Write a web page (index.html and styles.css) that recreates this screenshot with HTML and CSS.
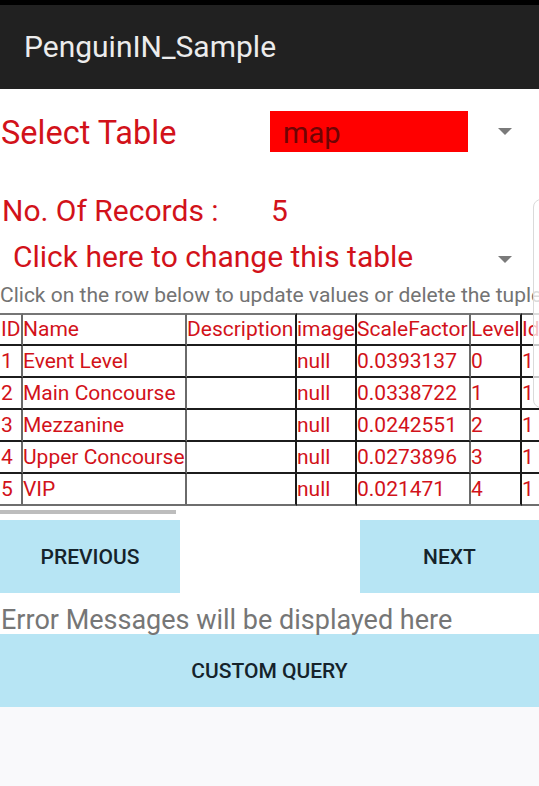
FILE: index.html
```html
<!DOCTYPE html>
<html>
<head>
<meta charset="utf-8">
<link rel="stylesheet" href="styles.css">
</head>
<body>
<div class="statusbar"></div>
<header class="appbar"><span class="title">PenguinIN_Sample</span></header>
<main class="content">
  <div class="select-row">
    <span class="select-label">Select Table</span>
    <div class="select-box"><span class="select-value">map</span></div>
    <span class="caret caret-1"></span>
  </div>
  <div class="records-row">
    <span class="records-label">No. Of Records :</span>
    <span class="records-value">5</span>
  </div>
  <div class="change-row">
    <span class="change-label">Click here to change this table</span>
    <span class="caret"></span>
  </div>
  <div class="hint">Click on the row below to update values or delete the tuple</div>
  <div class="table-wrap">
    <table class="data">
      <colgroup>
        <col class="c-id"><col class="c-name"><col class="c-desc"><col class="c-img"><col class="c-scale"><col class="c-level"><col class="c-id2">
      </colgroup>
      <tr class="head">
        <td class="v-gray">ID</td><td class="v-gray">Name</td><td class="v-dark">Description</td><td class="v-dark">image</td><td class="v-gray">ScaleFactor</td><td class="v-dark">Level</td><td>Id</td>
      </tr>
      <tr>
        <td class="v-gray">1</td><td class="v-gray">Event Level</td><td class="v-dark"></td><td class="v-dark">null</td><td class="v-gray">0.0393137</td><td class="v-dark">0</td><td>1</td>
      </tr>
      <tr>
        <td class="v-gray">2</td><td class="v-gray">Main Concourse</td><td class="v-dark"></td><td class="v-dark">null</td><td class="v-gray">0.0338722</td><td class="v-dark">1</td><td>1</td>
      </tr>
      <tr>
        <td class="v-gray">3</td><td class="v-gray">Mezzanine</td><td class="v-dark"></td><td class="v-dark">null</td><td class="v-gray">0.0242551</td><td class="v-dark">2</td><td>1</td>
      </tr>
      <tr>
        <td class="v-gray">4</td><td class="v-gray">Upper Concourse</td><td class="v-dark"></td><td class="v-dark">null</td><td class="v-gray">0.0273896</td><td class="v-dark">3</td><td>1</td>
      </tr>
      <tr class="last">
        <td class="v-gray">5</td><td class="v-gray">VIP</td><td class="v-dark"></td><td class="v-dark">null</td><td class="v-gray">0.021471</td><td class="v-dark">4</td><td>1</td>
      </tr>
    </table>
  </div>
  <div class="hscroll"><div class="hscroll-thumb"></div></div>
  <div class="nav-row">
    <button class="btn btn-prev">PREVIOUS</button>
    <button class="btn btn-next">NEXT</button>
  </div>
  <div class="error">Error Messages will be displayed here</div>
  <button class="btn btn-query">CUSTOM QUERY</button>
</main>
<div class="edge-popup"></div>
</body>
</html>
```

FILE: styles.css
```css
html, body {
  margin: 0;
  padding: 0;
}
body {
  width: 539px;
  height: 786px;
  overflow: hidden;
  background: #f9f9fb;
  font-family: Roboto, "Noto Sans", sans-serif;
  position: relative;
}
.statusbar {
  height: 5px;
  background: #000;
}
.appbar {
  height: 84px;
  background: #212121;
  display: flex;
  align-items: center;
  padding-left: 24px;
  box-sizing: border-box;
}
.title {
  color: #ececec;
  font-size: 30px;
  line-height: 36px;
}
.content {
  background: #fff;
  padding-top: 22px;
}
.select-row {
  display: flex;
  align-items: flex-start;
  height: 41px;
}
.select-label {
  width: 269px;
  padding-left: 1px;
  color: #d2121a;
  font-size: 32.5px;
  line-height: 41px;
  margin-top: 2px;
  white-space: nowrap;
}
.select-box {
  width: 198px;
  height: 41px;
  background: #ff0000;
  padding-left: 13px;
  box-sizing: border-box;
}
.select-value {
  display: block;
  color: #6e0404;
  font-size: 29px;
  line-height: 41px;
  margin-top: 2px;
}
.caret {
  width: 0;
  height: 0;
  border-left: 7px solid transparent;
  border-right: 7px solid transparent;
  border-top: 7px solid #7a7a7a;
  margin-left: 30px;
  align-self: center;
}
.records-row {
  display: flex;
  margin-top: 41px;
  color: #d2121a;
  font-size: 30px;
  line-height: 36px;
  height: 36px;
}
.records-label {
  width: 269px;
  padding-left: 2px;
  white-space: nowrap;
}
.change-row {
  display: flex;
  align-items: center;
  margin-top: 10px;
  height: 36px;
}
.change-label {
  color: #d2121a;
  font-size: 30px;
  line-height: 36px;
  padding-left: 13px;
  width: 485px;
  white-space: nowrap;
}
.change-row .caret {
  margin-left: 0;
  margin-top: 4px;
}
.hint {
  margin-top: 8px;
  color: #737373;
  font-size: 21px;
  line-height: 24px;
  white-space: nowrap;
  overflow: hidden;
}
.table-wrap {
  margin-top: 6px;
  overflow: hidden;
  width: 539px;
}
.data {
  border-collapse: separate;
  border-spacing: 0;
  table-layout: fixed;
  width: 562px;
  font-size: 21px;
  color: #d2121a;
}
.c-id { width: 23px; }
.c-name { width: 164px; }
.c-desc { width: 110px; }
.c-img { width: 60px; }
.c-scale { width: 114px; }
.c-level { width: 51px; }
.c-id2 { width: 40px; }
.data td {
  height: 30px;
  padding: 0;
  line-height: 30px;
  white-space: nowrap;
  overflow: hidden;
  border-bottom: 2px solid #1c1c1c;
  box-sizing: content-box;
  vertical-align: top;
}
.data td:first-child { padding-left: 1px; }
.data td.v-gray { border-right: 2px solid #6a6a6a; }
.data td.v-dark { border-right: 2px solid #1a1a1a; }
.data tr.head td {
  border-top: 2px solid #767676;
  height: 29px;
  line-height: 29px;
}
.data tr.last td {
  border-bottom-color: #6e6e6e;
}
.hscroll {
  margin-top: 4px;
  height: 4px;
}
.hscroll-thumb {
  width: 176px;
  height: 4px;
  background: #bdbdbd;
}
.nav-row {
  display: flex;
  justify-content: space-between;
  margin-top: 6px;
}
.btn {
  border: none;
  margin: 0;
  padding: 0;
  background: #b7e5f4;
  color: #15232b;
  font-family: Roboto, "Noto Sans", sans-serif;
  font-weight: 500;
  font-size: 21px;
  height: 73px;
  display: block;
}
.btn-prev { width: 180px; }
.btn-next { width: 179px; }
.error {
  margin-top: 13px;
  padding-left: 1px;
  color: #767676;
  font-size: 27px;
  line-height: 28px;
  white-space: nowrap;
}
.btn-query {
  width: 539px;
  height: 73px;
}
.edge-popup {
  position: absolute;
  left: 533px;
  top: 199px;
  width: 30px;
  height: 207px;
  border: 1.5px solid #dadada;
  border-radius: 8px;
  background: rgba(255, 255, 255, 0.75);
}
```
